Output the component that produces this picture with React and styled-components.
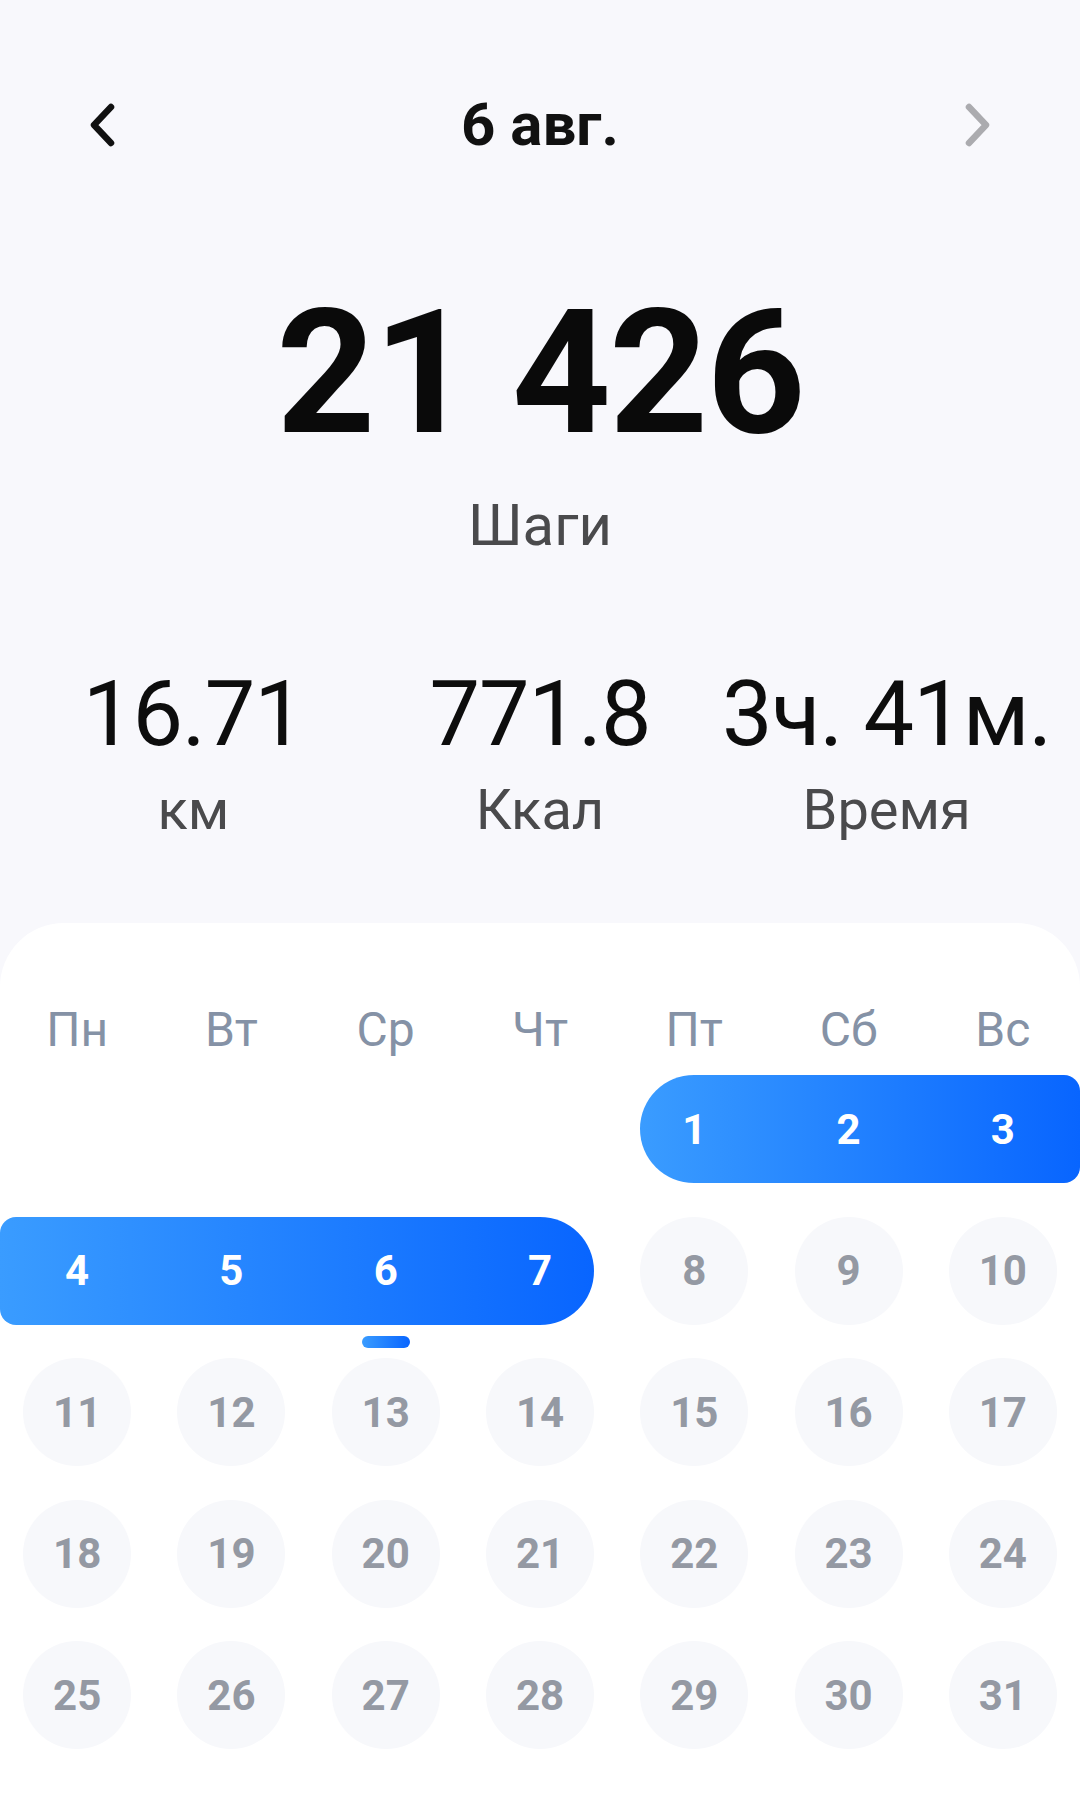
import React from 'react';
import styled, { createGlobalStyle } from 'styled-components';

const GlobalStyle = createGlobalStyle`
  html, body {
    margin: 0;
    padding: 0;
    background: #f8f8fc;
  }
  body {
    font-family: Roboto, 'Noto Sans', 'Liberation Sans', sans-serif;
  }
  * {
    box-sizing: border-box;
  }
`;

const weekDays = ['Пн', 'Вт', 'Ср', 'Чт', 'Пт', 'Сб', 'Вс'];
const firstOffset = 4; // 1 августа — пятница
const daysInMonth = 31;
const rangeStart = 1;
const rangeEnd = 7;
const selectedDay = 6;

const days = Array.from({ length: daysInMonth }, (_, i) => {
  const day = i + 1;
  const index = i + firstOffset;
  return {
    day,
    row: Math.floor(index / 7) + 1,
    col: (index % 7) + 1,
    inRange: day >= rangeStart && day <= rangeEnd,
  };
});

// pieces of the selected week, one per calendar row
const rangePieces = [
  { row: 1, from: 5, to: 8, capLeft: true, capRight: false },
  { row: 2, from: 1, to: 5, capLeft: false, capRight: true },
];

function Chevron({ direction, color }) {
  const d = direction === 'left' ? 'M23 5 L6 23 L23 41' : 'M5 5 L22 23 L5 41';
  return (
    <ChevronIcon viewBox="0 0 28 46" width="28" height="46">
      <path
        d={d}
        fill="none"
        stroke={color}
        strokeWidth="6.5"
        strokeLinecap="round"
        strokeLinejoin="round"
      />
    </ChevronIcon>
  );
}

export default function App() {
  return (
    <>
      <GlobalStyle />
      <Page>
        <Header>
          <NavButton>
            <Chevron direction="left" color="#111111" />
          </NavButton>
          <Title>6 авг.</Title>
          <NavButton>
            <Chevron direction="right" color="#ababaf" />
          </NavButton>
        </Header>

        <StepsBlock>
          <StepsValue>21 426</StepsValue>
          <StepsLabel>Шаги</StepsLabel>
        </StepsBlock>

        <Stats>
          <Stat>
            <StatValue>16.71</StatValue>
            <StatLabel>км</StatLabel>
          </Stat>
          <Stat>
            <StatValue>771.8</StatValue>
            <StatLabel>Ккал</StatLabel>
          </Stat>
          <Stat>
            <StatValue>3ч. 41м.</StatValue>
            <StatLabel>Время</StatLabel>
          </Stat>
        </Stats>

        <CalendarCard>
          <WeekHeader>
            {weekDays.map((w) => (
              <WeekDay key={w}>{w}</WeekDay>
            ))}
          </WeekHeader>
          <DaysGrid>
            {rangePieces.map((p) => (
              <RangePill
                key={p.row}
                style={{ gridRow: p.row, gridColumn: `${p.from} / ${p.to}` }}
                $capLeft={p.capLeft}
                $capRight={p.capRight}
              />
            ))}
            {days.map((d) => (
              <DayCell key={d.day} style={{ gridRow: d.row, gridColumn: d.col }}>
                <DayCircle $active={d.inRange}>
                  {d.day}
                  {d.day === selectedDay && <TodayMark />}
                </DayCircle>
              </DayCell>
            ))}
          </DaysGrid>
        </CalendarCard>
      </Page>
    </>
  );
}

const Page = styled.div`
  min-height: 1801px;
  display: flex;
  flex-direction: column;
  background: #f8f8fc;
`;

const Header = styled.header`
  display: flex;
  align-items: center;
  justify-content: space-between;
  height: 60px;
  margin-top: 95px;
  padding: 0 88px 0 88px;
`;

const NavButton = styled.div`
  width: 28px;
  height: 46px;
  display: flex;
  align-items: center;
  justify-content: center;
`;

const ChevronIcon = styled.svg`
  display: block;
`;

const Title = styled.h1`
  margin: 0;
  font-size: 60px;
  line-height: 60px;
  font-weight: 700;
  color: #111111;
`;

const StepsBlock = styled.section`
  display: flex;
  flex-direction: column;
  align-items: center;
  margin-top: 132px;
`;

const StepsValue = styled.div`
  font-size: 173px;
  line-height: 1;
  font-weight: 700;
  color: #0a0a0a;
  letter-spacing: -2px;
`;

const StepsLabel = styled.div`
  margin-top: 36px;
  font-size: 58px;
  line-height: 1;
  color: #4a4a4c;
`;

const Stats = styled.section`
  display: grid;
  grid-template-columns: repeat(3, 1fr);
  padding: 0 20px;
  margin-top: 116px;
`;

const Stat = styled.div`
  display: flex;
  flex-direction: column;
  align-items: center;
  gap: 22px;
`;

const StatValue = styled.div`
  font-size: 90px;
  line-height: 1;
  color: #0d0d0d;
  letter-spacing: -1px;
  white-space: nowrap;
`;

const StatLabel = styled.div`
  font-size: 56px;
  line-height: 1;
  color: #4a4a4c;
`;

const CalendarCard = styled.section`
  flex: 1;
  margin-top: 85px;
  padding-top: 83px;
  background: #ffffff;
  border-radius: 64px 64px 0 0;
`;

const WeekHeader = styled.div`
  display: grid;
  grid-template-columns: repeat(7, 1fr);
`;

const WeekDay = styled.div`
  text-align: center;
  font-size: 48px;
  line-height: 1;
  color: #8592a6;
`;

const DaysGrid = styled.div`
  display: grid;
  grid-template-columns: repeat(7, 1fr);
  grid-auto-rows: 108px;
  row-gap: 33.5px;
  margin-top: 21px;
`;

const RangePill = styled.div`
  z-index: 0;
  background: linear-gradient(90deg, #3a9cff 0%, #0865ff 100%);
  margin-left: ${(p) => (p.$capLeft ? '23px' : '0')};
  margin-right: ${(p) => (p.$capRight ? '23px' : '0')};
  border-radius: ${(p) =>
    `${p.$capLeft ? '54px' : '16px'} ${p.$capRight ? '54px' : '16px'} ${
      p.$capRight ? '54px' : '16px'
    } ${p.$capLeft ? '54px' : '16px'}`};
`;

const DayCell = styled.div`
  z-index: 1;
  display: flex;
  align-items: center;
  justify-content: center;
`;

const DayCircle = styled.div`
  position: relative;
  width: 108px;
  height: 108px;
  border-radius: 50%;
  display: flex;
  align-items: center;
  justify-content: center;
  font-size: 42px;
  font-weight: 700;
  background: ${(p) => (p.$active ? 'transparent' : '#f7f8fb')};
  color: ${(p) => (p.$active ? '#ffffff' : '#9499a3')};
`;

const TodayMark = styled.span`
  position: absolute;
  left: 50%;
  top: calc(100% + 11px);
  transform: translateX(-50%);
  width: 48px;
  height: 12px;
  border-radius: 6px;
  background: linear-gradient(90deg, #3a9cff 0%, #0865ff 100%);
`;
